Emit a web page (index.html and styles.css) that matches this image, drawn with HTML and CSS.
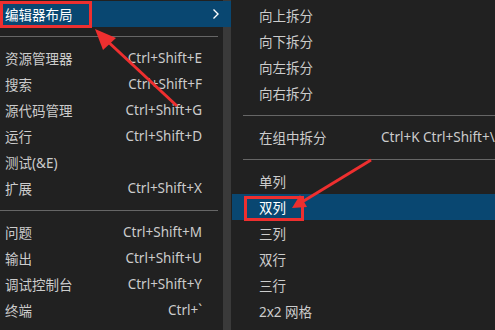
FILE: index.html
```html
<!DOCTYPE html>
<html lang="zh-CN">
<head>
<meta charset="utf-8">
<link rel="stylesheet" href="styles.css">
</head>
<body>
<div class="page">
  <div class="menu menu-left">
    <div class="row active">
      <span class="label">编辑器布局</span>
      <span class="chev"><svg width="8" height="12" viewBox="0 0 8 12"><path d="M1.5 1.5 L6 6 L1.5 10.5" fill="none" stroke="#ffffff" stroke-width="1.4"/></svg></span>
    </div>
    <div class="sep"></div>
    <div class="row"><span class="label">资源管理器</span><span class="key">Ctrl+Shift+E</span></div>
    <div class="row"><span class="label">搜索</span><span class="key">Ctrl+Shift+F</span></div>
    <div class="row"><span class="label">源代码管理</span><span class="key">Ctrl+Shift+G</span></div>
    <div class="row"><span class="label">运行</span><span class="key">Ctrl+Shift+D</span></div>
    <div class="row"><span class="label">测试(&amp;E)</span><span class="key"></span></div>
    <div class="row"><span class="label">扩展</span><span class="key">Ctrl+Shift+X</span></div>
    <div class="sep"></div>
    <div class="row"><span class="label">问题</span><span class="key">Ctrl+Shift+M</span></div>
    <div class="row"><span class="label">输出</span><span class="key">Ctrl+Shift+U</span></div>
    <div class="row"><span class="label">调试控制台</span><span class="key">Ctrl+Shift+Y</span></div>
    <div class="row"><span class="label">终端</span><span class="key">Ctrl+`</span></div>
  </div>
  <div class="menu menu-right">
    <div class="row"><span class="label">向上拆分</span></div>
    <div class="row"><span class="label">向下拆分</span></div>
    <div class="row"><span class="label">向左拆分</span></div>
    <div class="row"><span class="label">向右拆分</span></div>
    <div class="sep"></div>
    <div class="row"><span class="label">在组中拆分</span><span class="key">Ctrl+K Ctrl+Shift+\</span></div>
    <div class="sep"></div>
    <div class="row"><span class="label">单列</span></div>
    <div class="row active"><span class="label">双列</span></div>
    <div class="row"><span class="label">三列</span></div>
    <div class="row"><span class="label">双行</span></div>
    <div class="row"><span class="label">三行</span></div>
    <div class="row"><span class="label">2x2 网格</span></div>
  </div>
  <div class="mark mark-1"></div>
  <div class="mark mark-2"></div>
  <svg class="arrows" width="495" height="330" viewBox="0 0 495 330">
    <line x1="177" y1="106" x2="104" y2="38" stroke="#ee2f2f" stroke-width="3"/>
    <polygon points="95,29 116,38 103,50" fill="#ee2f2f"/>
    <line x1="371" y1="160" x2="302" y2="202" stroke="#ee2f2f" stroke-width="3"/>
    <polygon points="292,208 300,195 307,207" fill="#ee2f2f"/>
  </svg>
</div>
</body>
</html>
```
FILE: styles.css
```css
* { box-sizing: border-box; }
html, body { margin: 0; padding: 0; background: #202020; }
.page {
  position: relative;
  width: 495px;
  height: 330px;
  overflow: hidden;
  display: flex;
  font-family: "Noto Sans", "Noto Sans CJK SC", sans-serif;
  font-size: 13.5px;
  color: #cccccc;
}
.menu {
  height: 330px;
  white-space: nowrap;
  overflow: hidden;
}
.menu-left {
  width: 231px;
  flex: none;
  padding-top: 1px;
  background: linear-gradient(to right, #212121 0, #212121 223px, #3a3a3a 223px, #3a3a3a 231px);
}
.menu-right {
  flex: 1;
  padding-top: 2px;
  padding-left: 1px;
  background: #212121;
}
.row {
  height: 26px;
  display: flex;
  align-items: center;
}
.menu-left .row { padding-left: 5px; padding-right: 29px; }
.menu-left .label { flex: 1; }
.menu-right .row { padding-left: 27px; }
.menu-right .label { width: 122px; flex: none; }
.row.active { background: #094771; color: #ffffff; }
.chev { display: flex; align-items: center; margin-right: -18px; width: 8px; }
.sep {
  height: 18px;
  display: flex;
  align-items: center;
}
.sep::before {
  content: "";
  display: block;
  height: 1px;
  background: #666666;
  flex: 1;
}
.menu-left .sep { padding-right: 13px; }
.menu-right .sep { padding-left: 11px; }
.mark {
  position: absolute;
  border: 3px solid #ee2f2f;
}
.mark-1 { left: 0; top: 1px; width: 92px; height: 27px; }
.mark-2 { left: 244px; top: 196px; width: 60px; height: 25px; }
.arrows { position: absolute; left: 0; top: 0; }
```
